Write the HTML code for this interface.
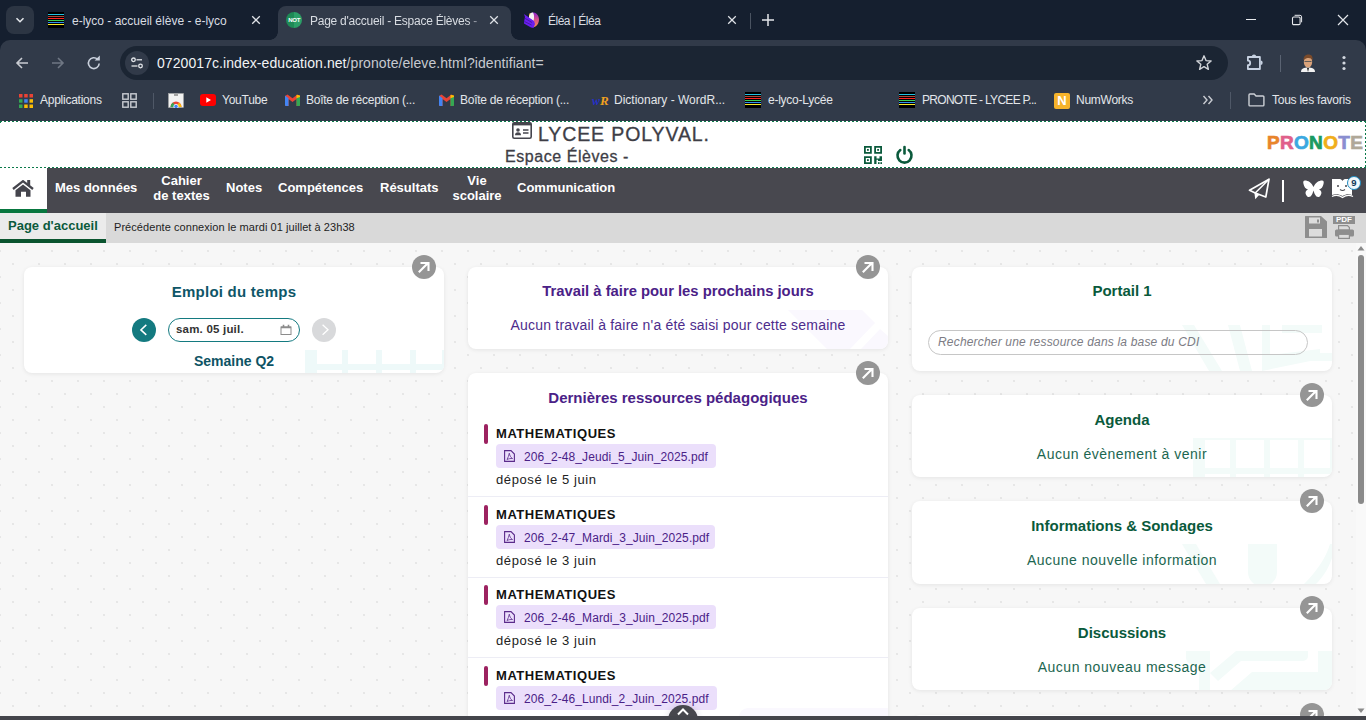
<!DOCTYPE html>
<html><head><meta charset="utf-8">
<style>
*{box-sizing:border-box;margin:0;padding:0}
html,body{width:1366px;height:720px;overflow:hidden;font-family:"Liberation Sans",sans-serif}
body{position:relative;background:#f7f7f7}
.abs{position:absolute}
/* chrome */
#tabstrip{position:absolute;left:0;top:0;width:1366px;height:50px;background:#151f2f}
#toolbar{position:absolute;left:0;top:40px;width:1366px;height:81px;background:#313a49;border-radius:10px 10px 0 0}
.tabtxt{position:absolute;top:14px;font-size:12px;color:#d8dce2;white-space:nowrap}
.bm{position:absolute;font-size:12px;letter-spacing:-0.25px;color:#e3e6ea;white-space:nowrap;margin-top:2px}
/* page */
#hdr{position:absolute;left:0;top:121px;width:1366px;height:47px;background:#fff}
.dh{position:absolute;height:1px;background:repeating-linear-gradient(90deg,#0b7a4a 0 2px,transparent 2px 4px)}
.dv{position:absolute;width:1px;background:repeating-linear-gradient(180deg,#0b7a4a 0 2px,transparent 2px 4px)}
#nav{position:absolute;left:0;top:168px;width:1366px;height:45px;background:#48484f}
.nv{position:absolute;color:#fff;font-weight:bold;font-size:13px;text-align:center;line-height:14px;white-space:nowrap}
#sub{position:absolute;left:0;top:213px;width:1366px;height:30px;background:#d9d9d9;z-index:2}
#content{position:absolute;left:0;top:242px;width:1356px;height:478px;background-color:#f7f7f7;
 background-image:radial-gradient(circle at 1px 1px,#e6e6e6 0.7px,transparent 1.4px),radial-gradient(circle at 14px 14px,#e6e6e6 0.7px,transparent 1.4px);
 background-size:26px 26px;background-position:-1px 8px,-1px 8px}
.card{position:absolute;background:#fff;border-radius:8px;box-shadow:0 1px 4px rgba(0,0,0,.08);overflow:hidden}
.ctitle{position:absolute;left:0;right:0;text-align:center;font-weight:bold;font-size:15px}
.ctext{position:absolute;left:0;right:0;text-align:center;font-size:13.5px}
.exp{position:absolute;width:24px;height:24px;border-radius:50%;background:#959595}
</style></head><body>
<!-- TAB STRIP -->
<div id="tabstrip">
 <div class="abs" style="left:6px;top:6px;width:28px;height:28px;border-radius:8px;background:#2c3543"></div>
 <svg class="abs" style="left:14px;top:14px" width="12" height="12" viewBox="0 0 12 12"><path d="M2.5 4.2 L6 7.7 L9.5 4.2" stroke="#e3e6ea" stroke-width="1.6" fill="none"/></svg>
 <!-- tab1 -->
 <svg class="abs" style="left:48px;top:12px" width="16" height="16" viewBox="0 0 16 16"><rect width="16" height="16" fill="#000"/><rect y="2" width="16" height="1" fill="#20c0e0"/><rect y="4" width="16" height="1" fill="#a84a38"/><rect y="6" width="16" height="1" fill="#ff2020"/><rect y="8" width="16" height="1" fill="#40d050"/><rect y="10" width="16" height="1" fill="#3090f0"/><rect y="12" width="16" height="1" fill="#f8e828"/></svg>
 <div class="tabtxt" style="left:72px">e-lyco - accueil élève - e-lyco</div>
 <svg class="abs" style="left:250px;top:14px" width="12" height="12" viewBox="0 0 12 12"><path d="M2.2 2.2L9.8 9.8M9.8 2.2L2.2 9.8" stroke="#dfe2e7" stroke-width="1.25"/></svg>
 <!-- active tab -->
 <div class="abs" style="left:278px;top:6px;width:233px;height:34px;background:#313a49;border-radius:8px 8px 0 0"></div>
 <div class="abs" style="left:270px;top:32px;width:8px;height:8px;background:radial-gradient(circle at 0 0,#151f2f 7.5px,#313a49 8px)"></div>
 <div class="abs" style="left:511px;top:32px;width:8px;height:8px;background:radial-gradient(circle at 8px 0,#151f2f 7.5px,#313a49 8px)"></div>
 <svg class="abs" style="left:286px;top:12px" width="16" height="16" viewBox="0 0 16 16"><path d="M8 0A8 8 0 0 0 8 16Z" fill="#1e8a56"/><path d="M8 0A8 8 0 0 1 8 16Z" fill="#2c9f68"/><text x="8.2" y="10.3" font-size="6" font-weight="bold" fill="#fff" text-anchor="middle" font-family="Liberation Sans" letter-spacing="-0.2">NOT</text></svg>
 <div class="tabtxt" style="left:310px;letter-spacing:-0.25px;width:176px;overflow:hidden;-webkit-mask-image:linear-gradient(90deg,#000 158px,transparent 176px)">Page d'accueil - Espace Élèves -</div>
 <svg class="abs" style="left:488px;top:14px" width="12" height="12" viewBox="0 0 12 12"><path d="M2.2 2.2L9.8 9.8M9.8 2.2L2.2 9.8" stroke="#dfe2e7" stroke-width="1.25"/></svg>
 <!-- tab3 -->
 <svg class="abs" style="left:524px;top:12px" width="16" height="16" viewBox="0 0 16 16"><defs><linearGradient id="pg" x1="0" y1="0" x2="0" y2="1"><stop offset="0" stop-color="#8a1fd0"/><stop offset="0.5" stop-color="#d8508a"/><stop offset="1" stop-color="#f88a50"/></linearGradient></defs>
 <path d="M8 0.2C12.5 0.2 15 3.5 15 7.5C15 11.5 12.5 15 9 15.2L8.6 0.2Z" fill="url(#pg)"/>
 <path d="M5 2.5C6 1 7.5 0.3 9 0.5C10 2 10.5 5 9.5 9L5 6.5Z" fill="#f4f0f4"/><path d="M5 2.5C5.5 1.5 6 1.2 6.5 1L5.5 4Z" fill="#f0a020"/>
 <path d="M0 2L10 9L11 12L9.5 16L7 15.5L0 11.5L0.2 9L1 5Z" fill="#6a1ef0"/>
 <path d="M0.5 6L8 10.5M0.5 9.5L7.5 13" stroke="#3a148a" stroke-width="0.7"/></svg>
 <div class="tabtxt" style="left:548px;letter-spacing:-0.5px">Éléa | Éléa</div>
 <svg class="abs" style="left:726px;top:14px" width="12" height="12" viewBox="0 0 12 12"><path d="M2.2 2.2L9.8 9.8M9.8 2.2L2.2 9.8" stroke="#dfe2e7" stroke-width="1.25"/></svg>
 <div class="abs" style="left:750px;top:13px;width:1px;height:16px;background:#4a5361"></div>
 <svg class="abs" style="left:761px;top:13px" width="14" height="14" viewBox="0 0 14 14"><path d="M7 1V13M1 7H13" stroke="#e3e6ea" stroke-width="1.5"/></svg>
 <!-- window controls -->
 <div class="abs" style="left:1246px;top:19px;width:10px;height:1px;background:#e8eaee"></div>
 <svg class="abs" style="left:1291px;top:14px" width="12" height="12" viewBox="0 0 12 12"><rect x="1.5" y="3" width="7.6" height="7.6" rx="1.2" stroke="#e8eaee" stroke-width="1.1" fill="none"/><path d="M3.6 1.3H9A1.6 1.6 0 0 1 10.6 2.9V8.3" stroke="#e8eaee" stroke-width="1" fill="none"/></svg>
 <svg class="abs" style="left:1337px;top:14px" width="12" height="12" viewBox="0 0 12 12"><path d="M1 1L11 11M11 1L1 11" stroke="#e3e6ea" stroke-width="1.2"/></svg>
</div>
<!-- TOOLBAR -->
<div id="toolbar">
 <svg class="abs" style="left:14px;top:15px" width="16" height="16" viewBox="0 0 16 16"><path d="M14 8H3M8 3L3 8L8 13" stroke="#c9ccd2" stroke-width="1.6" fill="none"/></svg>
 <svg class="abs" style="left:50px;top:15px" width="16" height="16" viewBox="0 0 16 16"><path d="M2 8H13M8 3L13 8L8 13" stroke="#6f7784" stroke-width="1.6" fill="none"/></svg>
 <svg class="abs" style="left:86px;top:15px" width="16" height="16" viewBox="0 0 16 16"><path d="M13.2 8.5A5.4 5.4 0 1 1 11.6 4.3" stroke="#c9d0dc" stroke-width="1.6" fill="none"/><path d="M8.6 5.6H13.8V0.4Z" fill="#c9d0dc"/></svg>
 <div class="abs" style="left:120px;top:6px;width:1108px;height:34px;border-radius:17px;background:#1b2533"></div>
 <div class="abs" style="left:125px;top:11px;width:24px;height:24px;border-radius:12px;background:#313a49"></div>
 <svg class="abs" style="left:129px;top:15px" width="16" height="16" viewBox="0 0 16 16"><circle cx="4.5" cy="4.8" r="1.8" stroke="#e3e6ea" stroke-width="1.3" fill="none"/><path d="M7.5 4.8H13" stroke="#e3e6ea" stroke-width="1.3"/><circle cx="11.5" cy="11" r="1.8" stroke="#e3e6ea" stroke-width="1.3" fill="none"/><path d="M2.5 11H8.5" stroke="#e3e6ea" stroke-width="1.3"/></svg>
 <div class="abs" style="left:157px;top:15px;font-size:14px;letter-spacing:0.07px;color:#c7cad0;white-space:nowrap"><span style="color:#f1f3f5">0720017c.index-education.net</span>/pronote/eleve.html?identifiant=</div>
 <svg class="abs" style="left:1195px;top:14px" width="18" height="18" viewBox="0 0 18 18"><path d="M9 1.8L11 6.6L16.1 7L12.2 10.3L13.4 15.3L9 12.6L4.6 15.3L5.8 10.3L1.9 7L7 6.6Z" stroke="#d2d5da" stroke-width="1.4" fill="none" stroke-linejoin="round"/></svg>
 <svg class="abs" style="left:1245px;top:13px" width="20" height="20" viewBox="0 0 20 20"><path d="M2.9 4H14.9V16H2.9V12.2A2.3 2.3 0 0 0 2.9 7.6Z" stroke="#c8d2e2" stroke-width="1.8" fill="none" stroke-linejoin="round"/><path d="M6.8 3.6A2.2 2.2 0 0 1 11.2 3.6Z" fill="#c8d2e2"/><path d="M15.5 7.6A2.2 2.2 0 0 1 15.5 12Z" fill="#c8d2e2"/></svg>
 <div class="abs" style="left:1280px;top:15px;width:1px;height:17px;background:#5a6372"></div>
 <svg class="abs" style="left:1298px;top:13px" width="20" height="20" viewBox="0 0 20 20"><path d="M3 19C3 15.5 6 14.5 10 14.5C14 14.5 17 15.5 17 19Z" fill="#f2f2f2"/><path d="M9 15L10 19L11 15Z" fill="#222"/><ellipse cx="10" cy="9" rx="4.2" ry="5.5" fill="#d9a27a"/><path d="M5.5 7C5.5 3 8 1.5 10.5 1.5C13.5 1.5 15 3.5 14.6 7.5C13.5 5 11 4.5 8 5.5Z" fill="#7a4a2a"/><path d="M6.5 8.5H13.5" stroke="#555" stroke-width="0.9"/></svg>
 <svg class="abs" style="left:1340px;top:15px" width="8" height="17" viewBox="0 0 8 17"><circle cx="4" cy="2.5" r="1.6" fill="#d3d8e0"/><circle cx="4" cy="8" r="1.6" fill="#d3d8e0"/><circle cx="4" cy="13.5" r="1.6" fill="#d3d8e0"/></svg>
 <!-- bookmarks -->
 <svg class="abs" style="left:19px;top:54px" width="14" height="14" viewBox="0 0 14 14">
  <rect x="0" y="0" width="3.5" height="3.5" fill="#ea4335"/><rect x="5.2" y="0" width="3.5" height="3.5" fill="#ea4335"/><rect x="10.5" y="0" width="3.5" height="3.5" fill="#ea4335"/>
  <rect x="0" y="5.2" width="3.5" height="3.5" fill="#34a853"/><rect x="5.2" y="5.2" width="3.5" height="3.5" fill="#4285f4"/><rect x="10.5" y="5.2" width="3.5" height="3.5" fill="#fbbc04"/>
  <rect x="0" y="10.5" width="3.5" height="3.5" fill="#34a853"/><rect x="5.2" y="10.5" width="3.5" height="3.5" fill="#fbbc04"/><rect x="10.5" y="10.5" width="3.5" height="3.5" fill="#fbbc04"/></svg>
 <div class="bm" style="left:40px;top:51px">Applications</div>
 <svg class="abs" style="left:122px;top:53px" width="15" height="15" viewBox="0 0 15 15"><rect x="0.8" y="0.8" width="5.4" height="5.4" stroke="#c9ccd2" stroke-width="1.4" fill="none"/><rect x="8.8" y="0.8" width="5.4" height="5.4" stroke="#c9ccd2" stroke-width="1.4" fill="none"/><rect x="0.8" y="8.8" width="5.4" height="5.4" stroke="#c9ccd2" stroke-width="1.4" fill="none"/><rect x="8.8" y="8.8" width="5.4" height="5.4" stroke="#c9ccd2" stroke-width="1.4" fill="none"/></svg>
 <div class="abs" style="left:153px;top:53px;width:1px;height:16px;background:#4f5867"></div>
 <svg class="abs" style="left:168px;top:53px" width="16" height="15" viewBox="0 0 16 15"><rect x="0.5" y="0.5" width="15" height="14" fill="#f1f1f1" stroke="#aaa" stroke-width="0.5"/><rect x="6" y="1.5" width="4" height="1" fill="#555"/><path d="M2.5 14A5.5 5.5 0 0 1 13.5 14Z" fill="#ea4335"/><path d="M2.5 14A5.5 5.5 0 0 1 5 9.5L8 14Z" fill="#34a853"/><path d="M8 14L11 9.6A5.5 5.5 0 0 1 13.5 14Z" fill="#fbbc04"/><circle cx="8" cy="13.5" r="2.2" fill="#4285f4" stroke="#fff" stroke-width="0.8"/></svg>
 <svg class="abs" style="left:200px;top:54px" width="16" height="12" viewBox="0 0 16 12"><rect width="16" height="12" rx="3" fill="#ff0000"/><path d="M6.3 3.3L11 6L6.3 8.7Z" fill="#fff"/></svg>
 <div class="bm" style="left:222px;top:51px">YouTube</div>
 <svg class="abs" style="left:285px;top:54px" width="15" height="12" viewBox="0 0 15 12"><path d="M0 2V11A1 1 0 0 0 1 12H3.5V5L7.5 8L11.5 5V12H14A1 1 0 0 0 15 11V2L12.5 0.5L7.5 4.3L2.5 0.5Z" fill="#ea4335"/><path d="M0 2V11A1 1 0 0 0 1 12H3.5V4.2L0 1.5Z" fill="#4285f4"/><path d="M15 2V11A1 1 0 0 1 14 12H11.5V4.2L15 1.5Z" fill="#34a853"/><path d="M11.5 4.2V0.8L15 1.5V3Z" fill="#fbbc04"/></svg>
 <div class="bm" style="left:306px;top:51px">Boîte de réception (...</div>
 <svg class="abs" style="left:439px;top:54px" width="15" height="12" viewBox="0 0 15 12"><path d="M0 2V11A1 1 0 0 0 1 12H3.5V5L7.5 8L11.5 5V12H14A1 1 0 0 0 15 11V2L12.5 0.5L7.5 4.3L2.5 0.5Z" fill="#ea4335"/><path d="M0 2V11A1 1 0 0 0 1 12H3.5V4.2L0 1.5Z" fill="#4285f4"/><path d="M15 2V11A1 1 0 0 1 14 12H11.5V4.2L15 1.5Z" fill="#34a853"/><path d="M11.5 4.2V0.8L15 1.5V3Z" fill="#fbbc04"/></svg>
 <div class="bm" style="left:460px;top:51px">Boîte de réception (...</div>
 <div class="abs" style="left:592px;top:53px;font-size:12px;font-weight:bold;font-style:italic;color:#2430c8;font-family:'Liberation Serif',serif;white-space:nowrap">w<span style="color:#f0a020;font-size:13px">R</span></div>
 <div class="bm" style="left:614px;top:51px;letter-spacing:0">Dictionary - WordR...</div>
 <svg class="abs" style="left:745px;top:52px" width="16" height="16" viewBox="0 0 16 16"><rect width="16" height="16" fill="#000"/><rect y="2" width="16" height="1" fill="#20c0e0"/><rect y="4" width="16" height="1" fill="#a84a38"/><rect y="6" width="16" height="1" fill="#ff2020"/><rect y="8" width="16" height="1" fill="#40d050"/><rect y="10" width="16" height="1" fill="#3090f0"/><rect y="12" width="16" height="1" fill="#f8e828"/></svg>
 <div class="bm" style="left:768px;top:51px">e-lyco-Lycée</div>
 <svg class="abs" style="left:899px;top:52px" width="16" height="16" viewBox="0 0 16 16"><rect width="16" height="16" fill="#000"/><rect y="2" width="16" height="1" fill="#20c0e0"/><rect y="4" width="16" height="1" fill="#a84a38"/><rect y="6" width="16" height="1" fill="#ff2020"/><rect y="8" width="16" height="1" fill="#40d050"/><rect y="10" width="16" height="1" fill="#3090f0"/><rect y="12" width="16" height="1" fill="#f8e828"/></svg>
 <div class="bm" style="left:922px;top:51px;letter-spacing:-0.7px">PRONOTE - LYCEE P...</div>
 <div class="abs" style="left:1054px;top:53px;width:16px;height:16px;border-radius:2px;background:#f6b32b;color:#fff;font-weight:bold;font-size:13px;line-height:16px;text-align:center">N</div>
 <div class="bm" style="left:1076px;top:51px">NumWorks</div>
 <svg class="abs" style="left:1202px;top:54px" width="12" height="12" viewBox="0 0 12 12"><path d="M1.5 2L5 6L1.5 10M6.5 2L10 6L6.5 10" stroke="#c9ccd2" stroke-width="1.4" fill="none"/></svg>
 <div class="abs" style="left:1230px;top:52px;width:1px;height:17px;background:#4f5867"></div>
 <svg class="abs" style="left:1248px;top:53px" width="17" height="14" viewBox="0 0 17 14"><path d="M1 1.9A0.9 0.9 0 0 1 1.9 1H6.2L8 3H15A0.9 0.9 0 0 1 15.9 3.9V12A0.9 0.9 0 0 1 15 12.9H1.9A0.9 0.9 0 0 1 1 12Z" stroke="#cdd0d6" stroke-width="1.4" fill="none" stroke-linejoin="round"/></svg>
 <div class="bm" style="left:1272px;top:51px">Tous les favoris</div>
</div>
<!-- HEADER -->
<div id="hdr">
 <div class="dh" style="left:0;top:0;width:1366px"></div><div class="dh" style="left:0;top:46px;width:1366px"></div><div class="dv" style="left:1365px;top:0;height:47px"></div><div class="dv" style="left:0;top:0;height:2px"></div>
 <svg class="abs" style="left:512px;top:1px" width="20" height="17" viewBox="0 0 20 17"><rect x="0.8" y="0.8" width="18.4" height="15.4" rx="1.5" stroke="#45454d" stroke-width="1.6" fill="none"/><rect x="0.8" y="0.8" width="18.4" height="2.6" fill="#45454d"/><circle cx="6" cy="8" r="1.8" fill="#45454d"/><path d="M3 13.2A3 3 0 0 1 9 13.2Z" fill="#45454d"/><path d="M11 8H16.5M11 11H16.5" stroke="#45454d" stroke-width="1.3"/></svg>
 <div class="abs" style="left:538px;top:2px;font-size:19.5px;letter-spacing:0.9px;color:#3e3e46;-webkit-text-stroke:0.3px #3e3e46;white-space:nowrap">LYCEE POLYVAL.</div>
 <div class="abs" style="left:505px;top:27px;font-size:16px;letter-spacing:0.55px;color:#3e3e46;-webkit-text-stroke:0.3px #3e3e46;white-space:nowrap">Espace Élèves -</div>
 <svg class="abs" style="left:864px;top:25px" width="18" height="18" viewBox="0 0 18 18" fill="#0b5a3c"><path d="M0 0H7.8V7.8H0ZM1.8 1.8V6H6V1.8Z"/><rect x="3" y="3" width="1.8" height="1.8"/><path d="M10.2 0H18V7.8H10.2ZM12 1.8V6H16.2V1.8Z"/><rect x="13.2" y="3" width="1.8" height="1.8"/><path d="M0 10.2H7.8V18H0ZM1.8 12V16.2H6V12Z"/><rect x="3" y="13.2" width="1.8" height="1.8"/><path d="M10.2 10.2H12.5V12.5H15.5V10.2H18V15H14V13.8H12.5V18H10.2Z"/><rect x="14" y="16.2" width="1.6" height="1.8"/><rect x="16.4" y="16.2" width="1.6" height="1.8"/></svg>
 <svg class="abs" style="left:895px;top:24px" width="19" height="20" viewBox="0 0 19 20"><path d="M5.3 5A7 7 0 1 0 13.7 5" stroke="#0b5a3c" stroke-width="2.6" fill="none" stroke-linecap="round"/><path d="M9.5 2V8.5" stroke="#0b5a3c" stroke-width="2.6" stroke-linecap="round"/></svg>
 <div class="abs" style="left:1267px;top:11px;font-size:19px;font-weight:bold;letter-spacing:0.3px;-webkit-text-stroke:0.7px currentColor;white-space:nowrap"><span style="color:#e8842b">P</span><span style="color:#e0608a">R</span><span style="color:#3ba8e0">O</span><span style="color:#1a9a62">N</span><span style="color:#f0ae1a">O</span><span style="color:#8a8ed0">T</span><span style="color:#b0a898">E</span></div>
</div>
<!-- NAV -->
<div id="nav">
 <div class="abs" style="left:0;top:0;width:47px;height:45px;background:#fff"></div>
 <div class="abs" style="left:0;top:41px;width:47px;height:4px;background:#08773f"></div>
 <svg class="abs" style="left:12px;top:12px" width="22" height="18" viewBox="0 0 22 18" fill="#45454d"><path d="M1 9L11 1.2L21 9" stroke="#45454d" stroke-width="2.3" fill="none"/><rect x="15.2" y="0" width="3" height="5.5"/><path d="M3.5 10.2L11 4.4L18.5 10.2V16.8H14V11.8H9V16.8H3.5Z"/></svg>
 <div class="nv" style="left:55px;top:13px">Mes données</div>
 <div class="nv" style="left:148px;top:5px;width:67px;line-height:15px">Cahier<br>de textes</div>
 <div class="nv" style="left:226px;top:13px">Notes</div>
 <div class="nv" style="left:278px;top:13px">Compétences</div>
 <div class="nv" style="left:380px;top:13px">Résultats</div>
 <div class="nv" style="left:450px;top:5px;width:54px;line-height:15px">Vie<br>scolaire</div>
 <div class="nv" style="left:517px;top:13px">Communication</div>
 <svg class="abs" style="left:1248px;top:10px" width="23" height="23" viewBox="0 0 23 23"><path d="M21 1.2L1.5 12.3L7.2 15L17.8 19Z" stroke="#fff" stroke-width="1.7" fill="none" stroke-linejoin="round"/><path d="M21 1.2L7.2 15" stroke="#fff" stroke-width="1.5"/><path d="M6.4 14.2L7.2 21.2L11.6 16.5Z" fill="#fff"/></svg>
 <div class="abs" style="left:1282px;top:12px;width:1.6px;height:22px;background:#fff"></div>
 <svg class="abs" style="left:1303px;top:12px" width="21" height="18" viewBox="0 0 21 18" fill="#fff"><path d="M10.5 7C8.5 2.5 5 0.5 2 0.5C0.2 0.5 0 2 0.5 4C1.2 7 2.5 9 5 9.5C2.5 10.5 1.8 13 3.5 15.5C5 17.8 7.5 17.5 9 14.5C9.8 13 10.2 11.5 10.5 10.5C10.8 11.5 11.2 13 12 14.5C13.5 17.5 16 17.8 17.5 15.5C19.2 13 18.5 10.5 16 9.5C18.5 9 19.8 7 20.5 4C21 2 20.8 0.5 19 0.5C16 0.5 12.5 2.5 10.5 7Z"/></svg>
 <svg class="abs" style="left:1331px;top:10px" width="24" height="22" viewBox="0 0 24 22"><path d="M1 1H9C10 1 11 2 11.5 3C12 2 13 1 14 1H21V17C18 16 15 16 11.5 18C8 16 4 16 1 17Z" fill="#fff"/><path d="M1 18.5C4 17 8 17 11.5 19.5C15 17 19 17 22 18.5" stroke="#fff" stroke-width="1.3" fill="none"/><circle cx="7" cy="8" r="1" fill="#48484f"/><circle cx="15" cy="8" r="1" fill="#48484f"/><path d="M9 11.5Q11.5 13.5 14 11.5" stroke="#48484f" stroke-width="1.1" fill="none"/></svg>
 <div class="abs" style="left:1347px;top:8px;width:14px;height:14px;border-radius:50%;background:#f2f8fc;border:1.5px solid #1e8ac0;color:#123a5a;font-size:9.5px;font-weight:bold;line-height:11px;text-align:center">9</div>
</div>
<!-- SUB BAR -->
<div id="sub">
 <div class="abs" style="left:0;top:0;width:106px;height:30px;background:#ebebeb"></div>
 <div class="abs" style="left:0;top:26px;width:106px;height:4px;background:#0b5530"></div>
 <div class="abs" style="left:8px;top:5px;font-size:13px;font-weight:bold;color:#0b5a3c;white-space:nowrap">Page d'accueil</div>
 <div class="abs" style="left:114px;top:8px;font-size:11px;letter-spacing:0.06px;color:#1e1e1e;white-space:nowrap">Précédente connexion le mardi 01 juillet à 23h38</div>
 <svg class="abs" style="left:1305px;top:3px" width="22" height="22" viewBox="0 0 22 22"><path d="M0 0.5A0.5 0.5 0 0 1 0.5 0H16L22 5.5V21.5A0.5 0.5 0 0 1 21.5 22H0.5A0.5 0.5 0 0 1 0 21.5Z" fill="#8e8e8e"/><rect x="4" y="1.5" width="11" height="6" fill="#dcdcdc"/><rect x="12" y="3.5" width="2" height="3" fill="#8e8e8e"/><rect x="4" y="13" width="13" height="7.5" fill="#dcdcdc"/></svg>
 <div class="abs" style="left:1333px;top:3px;width:22px;height:8px;background:#8e8e8e;color:#fff;font-size:8px;font-weight:bold;line-height:8px;text-align:center">PDF</div>
 <svg class="abs" style="left:1334px;top:12px" width="22" height="14" viewBox="0 0 22 14"><path d="M4.6 0.6H13.5L15.4 2.5V5H4.6Z" fill="#dcdcdc" stroke="#8e8e8e" stroke-width="1.2"/><rect x="1" y="4.5" width="19" height="7" rx="1.5" fill="#8e8e8e"/><rect x="4.6" y="9.3" width="10.8" height="4.1" fill="#dcdcdc" stroke="#8e8e8e" stroke-width="1.2"/></svg>
</div>
<div id="content">
 <!-- card 1 -->
 <div class="card" style="left:24px;top:25px;width:420px;height:106px">
  <svg class="abs" style="left:281px;top:83px" width="139" height="23" viewBox="0 0 139 23" fill="#eef9f9"><rect x="0" y="0" width="12" height="23"/><rect x="37" y="0" width="6" height="23"/><rect x="71" y="0" width="6" height="23"/><rect x="105" y="0" width="6" height="23"/><rect x="137" y="0" width="2" height="23"/><rect x="0" y="14" width="139" height="6"/></svg>
  <div class="ctitle" style="top:16px;color:#0e5668;letter-spacing:0.25px">Emploi du temps</div>
  <div class="abs" style="left:108px;top:51px;width:24px;height:24px;border-radius:50%;background:#147a80"></div>
  <svg class="abs" style="left:114px;top:57px" width="12" height="12" viewBox="0 0 12 12"><path d="M8.3 0.9L2.9 5.9L8.3 10.9" stroke="#fff" stroke-width="1.5" fill="none"/></svg>
  <div class="abs" style="left:144px;top:51px;width:132px;height:24px;border-radius:12px;border:1.5px solid #147a80"></div>
  <div class="abs" style="left:152px;top:56px;font-size:11.5px;font-weight:bold;letter-spacing:0.2px;color:#333;white-space:nowrap">sam. 05 juil.</div>
  <svg class="abs" style="left:256px;top:57px" width="12" height="12" viewBox="0 0 12 12"><rect x="1" y="3" width="10" height="7.5" stroke="#8c8c8c" stroke-width="1" fill="none"/><path d="M1 3.4H11" stroke="#8c8c8c" stroke-width="1.6"/><path d="M3.5 0.8V3M8.5 0.8V3" stroke="#8c8c8c" stroke-width="1.6"/></svg>
  <div class="abs" style="left:288px;top:51px;width:24px;height:24px;border-radius:50%;background:#d8d9db"></div>
  <svg class="abs" style="left:294px;top:57px" width="12" height="12" viewBox="0 0 12 12"><path d="M4.6 0.8L10 5.8L4.6 10.8" stroke="#fff" stroke-width="1.3" fill="none"/></svg>
  <div class="ctitle" style="top:86px;font-size:14px;color:#0e5364">Semaine Q2</div>
 </div>
 <div class="exp" style="left:412px;top:13px"><svg style="position:absolute;left:5px;top:5px" width="14" height="14" viewBox="0 0 14 14"><path d="M1.8 12.2L11 3M3.5 3H11.5V11" stroke="#fff" stroke-width="2.1" fill="none"/></svg></div>
 <!-- card 2 -->
 <div class="card" style="left:468px;top:25px;width:420px;height:82px">
  <svg class="abs" style="left:320px;top:43px" width="100" height="39" viewBox="0 0 100 39" fill="#faf8fe"><path d="M0 0H74L87 13L62 39H39Z"/><path d="M73 39L92 19L100 26V39Z"/></svg>
  <div class="ctitle" style="top:16px;color:#4a2187;font-size:14.8px">Travail à faire pour les prochains jours</div>
  <div class="ctext" style="top:50px;color:#4d2c8c;font-size:14px;letter-spacing:0.2px">Aucun travail à faire n'a été saisi pour cette semaine</div>
 </div>
 <div class="exp" style="left:856px;top:13px"><svg style="position:absolute;left:5px;top:5px" width="14" height="14" viewBox="0 0 14 14"><path d="M1.8 12.2L11 3M3.5 3H11.5V11" stroke="#fff" stroke-width="2.1" fill="none"/></svg></div>
 <!-- card 3 -->
 <div class="card" style="left:468px;top:131px;width:420px;height:400px">
  <div class="abs" style="left:271px;top:335px;width:160px;height:30px;border-radius:9px;background:#faf8fe"></div>
  <div class="ctitle" style="top:16px;color:#4a2187">Dernières ressources pédagogiques</div>
  <div class="abs" style="left:16px;top:51.0px;width:4px;height:20px;border-radius:2px;background:#9c2260"></div>
  <div class="abs" style="left:28px;top:53.0px;font-size:13px;font-weight:bold;letter-spacing:0.55px;color:#111;white-space:nowrap">MATHEMATIQUES</div>
  <div class="abs" style="left:28px;top:71.0px;width:220px;height:24px;border-radius:4px;background:#ebdffb"></div>
  <svg class="abs" style="left:36px;top:77.0px" width="11" height="12" viewBox="0 0 11 12"><path d="M0.6 0.6H7L10.4 4V11.4H0.6Z" stroke="#5a2a8a" stroke-width="1.1" fill="none"/><path d="M3 9.5C4 7.5 5 5.5 5.3 3.2C5.6 5.5 6.8 7.5 8.5 8.5C6.5 8.3 4.5 8.8 3 9.5Z" stroke="#5a2a8a" stroke-width="0.8" fill="none"/></svg>
  <div class="abs" style="left:56px;top:77.0px;font-size:12px;letter-spacing:0.08px;color:#4a2187;white-space:nowrap">206_2-48_Jeudi_5_Juin_2025.pdf</div>
  <div class="abs" style="left:28px;top:99.0px;font-size:13px;letter-spacing:0.6px;color:#222;white-space:nowrap">déposé le 5 juin</div>
  <div class="abs" style="left:0;top:123.0px;width:420px;height:1px;background:#ededf5"></div>
  <div class="abs" style="left:16px;top:131.6px;width:4px;height:20px;border-radius:2px;background:#9c2260"></div>
  <div class="abs" style="left:28px;top:133.6px;font-size:13px;font-weight:bold;letter-spacing:0.55px;color:#111;white-space:nowrap">MATHEMATIQUES</div>
  <div class="abs" style="left:28px;top:151.6px;width:219px;height:24px;border-radius:4px;background:#ebdffb"></div>
  <svg class="abs" style="left:36px;top:157.6px" width="11" height="12" viewBox="0 0 11 12"><path d="M0.6 0.6H7L10.4 4V11.4H0.6Z" stroke="#5a2a8a" stroke-width="1.1" fill="none"/><path d="M3 9.5C4 7.5 5 5.5 5.3 3.2C5.6 5.5 6.8 7.5 8.5 8.5C6.5 8.3 4.5 8.8 3 9.5Z" stroke="#5a2a8a" stroke-width="0.8" fill="none"/></svg>
  <div class="abs" style="left:56px;top:157.6px;font-size:12px;letter-spacing:0.08px;color:#4a2187;white-space:nowrap">206_2-47_Mardi_3_Juin_2025.pdf</div>
  <div class="abs" style="left:28px;top:179.6px;font-size:13px;letter-spacing:0.6px;color:#222;white-space:nowrap">déposé le 3 juin</div>
  <div class="abs" style="left:0;top:203.6px;width:420px;height:1px;background:#ededf5"></div>
  <div class="abs" style="left:16px;top:212.2px;width:4px;height:20px;border-radius:2px;background:#9c2260"></div>
  <div class="abs" style="left:28px;top:214.2px;font-size:13px;font-weight:bold;letter-spacing:0.55px;color:#111;white-space:nowrap">MATHEMATIQUES</div>
  <div class="abs" style="left:28px;top:232.2px;width:220px;height:24px;border-radius:4px;background:#ebdffb"></div>
  <svg class="abs" style="left:36px;top:238.2px" width="11" height="12" viewBox="0 0 11 12"><path d="M0.6 0.6H7L10.4 4V11.4H0.6Z" stroke="#5a2a8a" stroke-width="1.1" fill="none"/><path d="M3 9.5C4 7.5 5 5.5 5.3 3.2C5.6 5.5 6.8 7.5 8.5 8.5C6.5 8.3 4.5 8.8 3 9.5Z" stroke="#5a2a8a" stroke-width="0.8" fill="none"/></svg>
  <div class="abs" style="left:56px;top:238.2px;font-size:12px;letter-spacing:0.08px;color:#4a2187;white-space:nowrap">206_2-46_Mardi_3_Juin_2025.pdf</div>
  <div class="abs" style="left:28px;top:260.2px;font-size:13px;letter-spacing:0.6px;color:#222;white-space:nowrap">déposé le 3 juin</div>
  <div class="abs" style="left:0;top:284.2px;width:420px;height:1px;background:#ededf5"></div>
  <div class="abs" style="left:16px;top:292.8px;width:4px;height:20px;border-radius:2px;background:#9c2260"></div>
  <div class="abs" style="left:28px;top:294.8px;font-size:13px;font-weight:bold;letter-spacing:0.55px;color:#111;white-space:nowrap">MATHEMATIQUES</div>
  <div class="abs" style="left:28px;top:312.8px;width:221px;height:24px;border-radius:4px;background:#ebdffb"></div>
  <svg class="abs" style="left:36px;top:318.8px" width="11" height="12" viewBox="0 0 11 12"><path d="M0.6 0.6H7L10.4 4V11.4H0.6Z" stroke="#5a2a8a" stroke-width="1.1" fill="none"/><path d="M3 9.5C4 7.5 5 5.5 5.3 3.2C5.6 5.5 6.8 7.5 8.5 8.5C6.5 8.3 4.5 8.8 3 9.5Z" stroke="#5a2a8a" stroke-width="0.8" fill="none"/></svg>
  <div class="abs" style="left:56px;top:318.8px;font-size:12px;letter-spacing:0.08px;color:#4a2187;white-space:nowrap">206_2-46_Lundi_2_Juin_2025.pdf</div>
 </div>
 <div class="exp" style="left:856px;top:119px"><svg style="position:absolute;left:5px;top:5px" width="14" height="14" viewBox="0 0 14 14"><path d="M1.8 12.2L11 3M3.5 3H11.5V11" stroke="#fff" stroke-width="2.1" fill="none"/></svg></div>
 <!-- right column -->
 <div class="card" style="left:912px;top:25px;width:420px;height:104px">
  <svg class="abs" style="left:270px;top:58px" width="150" height="46" viewBox="0 0 150 46" fill="#f3fbf9"><path d="M0 0H12L40 46H27Z"/><path d="M46 0H58L70 46H58Z"/><path d="M80 0H88V30L138 24V34L80 46Z"/><path d="M100 0H140V8H100Z"/><path d="M118 28H150V36H118Z"/></svg>
  <div class="ctitle" style="top:15px;color:#0a5a3c">Portail 1</div>
  <div class="abs" style="left:16px;top:63px;width:380px;height:25px;border-radius:13px;border:1px solid #c6c6c6"></div>
  <div class="abs" style="left:26px;top:68px;font-size:12px;font-style:italic;letter-spacing:0.18px;color:#7c7c84;white-space:nowrap">Rechercher une ressource dans la base du CDI</div>
 </div>
 <div class="card" style="left:912px;top:153px;width:420px;height:82px">
  <svg class="abs" style="left:281px;top:43px" width="139" height="39" viewBox="0 0 139 39" fill="#f3fbf9"><rect x="0" y="0" width="12" height="39"/><rect x="37" y="0" width="6" height="39"/><rect x="71" y="0" width="6" height="39"/><rect x="105" y="0" width="6" height="39"/><rect x="137" y="0" width="2" height="39"/><rect x="0" y="30" width="139" height="6"/><rect x="0" y="0" width="139" height="2"/></svg>
  <div class="ctitle" style="top:16px;color:#0a5a3c">Agenda</div>
  <div class="ctext" style="top:51px;color:#1c6650;font-size:14px;letter-spacing:0.5px">Aucun évènement à venir</div>
 </div>
 <div class="exp" style="left:1300px;top:141px"><svg style="position:absolute;left:5px;top:5px" width="14" height="14" viewBox="0 0 14 14"><path d="M1.8 12.2L11 3M3.5 3H11.5V11" stroke="#fff" stroke-width="2.1" fill="none"/></svg></div>
 <div class="card" style="left:912px;top:259px;width:420px;height:83px">
  <svg class="abs" style="left:270px;top:43px" width="150" height="40" viewBox="0 0 150 40" fill="#f3fbf9"><path d="M0 0H14L38 40H24Z"/><path d="M66 0H95V28A12 12 0 0 1 66 28Z"/><path d="M150 0V14C146 26 140 34 134 40H122C134 28 144 14 148 0Z"/></svg>
  <div class="ctitle" style="top:16px;color:#0a5a3c">Informations &amp; Sondages</div>
  <div class="ctext" style="top:51px;color:#1c6650;font-size:14px;letter-spacing:0.5px">Aucune nouvelle information</div>
 </div>
 <div class="exp" style="left:1300px;top:247px"><svg style="position:absolute;left:5px;top:5px" width="14" height="14" viewBox="0 0 14 14"><path d="M1.8 12.2L11 3M3.5 3H11.5V11" stroke="#fff" stroke-width="2.1" fill="none"/></svg></div>
 <div class="card" style="left:912px;top:366px;width:420px;height:82px">
  <svg class="abs" style="left:272px;top:43px" width="148" height="40" viewBox="0 0 148 40" fill="#f3fbf9"><path d="M2 0H26V40H15V13H8A6 6 0 0 1 2 7Z"/><path d="M26 22L52 0H124V5A5 5 0 0 1 119 10H57L34 30Z"/><path d="M46 40L68 21H134V0H148V40Z"/></svg>
  <div class="ctitle" style="top:16px;color:#0a5a3c">Discussions</div>
  <div class="ctext" style="top:51px;color:#1c6650;font-size:14px;letter-spacing:0.5px">Aucun nouveau message</div>
 </div>
 <div class="exp" style="left:1300px;top:354px"><svg style="position:absolute;left:5px;top:5px" width="14" height="14" viewBox="0 0 14 14"><path d="M1.8 12.2L11 3M3.5 3H11.5V11" stroke="#fff" stroke-width="2.1" fill="none"/></svg></div>
 <div class="card" style="left:912px;top:473px;width:420px;height:82px"></div>
 <div class="exp" style="left:1300px;top:461px"><svg style="position:absolute;left:5px;top:5px" width="14" height="14" viewBox="0 0 14 14"><path d="M1.8 12.2L11 3M3.5 3H11.5V11" stroke="#fff" stroke-width="2.1" fill="none"/></svg></div>
</div>
<!-- scrollbar -->
<div class="abs" style="left:1356px;top:242px;width:10px;height:478px;background:#f9f9f9"></div>
<svg class="abs" style="left:1357px;top:245px" width="8" height="6" viewBox="0 0 8 6"><path d="M0.5 5.5L4 1L7.5 5.5Z" fill="#8a8a8a"/></svg>
<div class="abs" style="left:1358px;top:255px;width:6px;height:249px;border-radius:3px;background:#8a8a8a"></div>
<svg class="abs" style="left:1357px;top:708px" width="8" height="6" viewBox="0 0 8 6"><path d="M0.5 0.5L4 5L7.5 0.5Z" fill="#8a8a8a"/></svg>
<div class="abs" style="left:668px;top:705px;width:30px;height:30px;border-radius:50%;background:#47474d;box-shadow:0 0 6px rgba(60,40,90,.18)"></div>
<svg class="abs" style="left:676px;top:707px" width="14" height="9" viewBox="0 0 14 9"><path d="M2 7.5L7 2.5L12 7.5" stroke="#fff" stroke-width="2" fill="none"/></svg>
<!-- bottom bar -->
<div class="abs" style="left:0;top:716px;width:1366px;height:4px;background:#44454b"></div>
</body></html>
